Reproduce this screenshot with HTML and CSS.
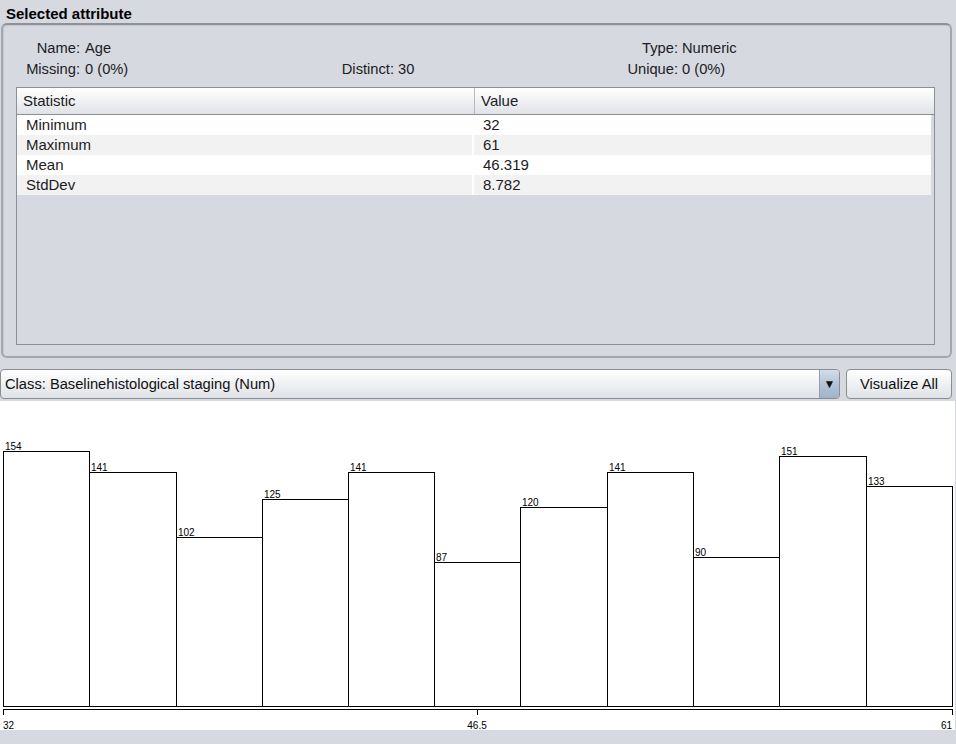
FILE: index.html
```html
<!DOCTYPE html>
<html>
<head>
<meta charset="utf-8">
<link rel="stylesheet" href="styles.css">
</head>
<body>
<div class="title">Selected attribute</div>
<div class="panel">
  <div class="info">
    <div class="group g1">
      <span class="lbl">Name:</span><span class="val">Age</span>
      <span class="lbl">Missing:</span><span class="val">0 (0%)</span>
    </div>
    <div class="group g2">
      <span class="lbl"></span><span class="val"></span>
      <span class="lbl">Distinct:</span><span class="val">30</span>
    </div>
    <div class="group g3">
      <span class="lbl">Type:</span><span class="val">Numeric</span>
      <span class="lbl">Unique:</span><span class="val">0 (0%)</span>
    </div>
  </div>
  <div class="table">
    <div class="thead">
      <div class="th c1">Statistic</div>
      <div class="th c2">Value</div>
    </div>
    <div class="tbody">
      <div class="tr"><div class="td c1">Minimum</div><div class="td c2">32</div></div>
      <div class="tr alt"><div class="td c1">Maximum</div><div class="td c2">61</div></div>
      <div class="tr"><div class="td c1">Mean</div><div class="td c2">46.319</div></div>
      <div class="tr alt"><div class="td c1">StdDev</div><div class="td c2">8.782</div></div>
    </div>
  </div>
</div>
<div class="controls">
  <div class="combo">
    <span class="combo-text">Class: Baselinehistological staging (Num)</span>
    <span class="combo-arrow">&#9660;</span>
  </div>
  <div class="button">Visualize All</div>
</div>
<div class="hist">
  <svg width="955" height="329" viewBox="0 0 955 329" shape-rendering="crispEdges">
    <g fill="#fff" stroke="#000" stroke-width="1">
      <rect x="3.5" y="50.5" width="86" height="255"/>
      <rect x="89.5" y="71.5" width="87" height="234"/>
      <rect x="176.5" y="136.5" width="86" height="169"/>
      <rect x="262.5" y="98.5" width="86" height="207"/>
      <rect x="348.5" y="71.5" width="86" height="234"/>
      <rect x="434.5" y="161.5" width="86" height="144"/>
      <rect x="520.5" y="106.5" width="87" height="199"/>
      <rect x="607.5" y="71.5" width="86" height="234"/>
      <rect x="693.5" y="156.5" width="86" height="149"/>
      <rect x="779.5" y="55.5" width="87" height="250"/>
      <rect x="866.5" y="85.5" width="86" height="220"/>
    </g>
    <g class="blabel">
      <text x="5" y="49">154</text>
      <text x="91" y="70">141</text>
      <text x="178" y="135">102</text>
      <text x="264" y="97">125</text>
      <text x="350" y="70">141</text>
      <text x="436" y="160">87</text>
      <text x="522" y="105">120</text>
      <text x="609" y="70">141</text>
      <text x="695" y="155">90</text>
      <text x="781" y="54">151</text>
      <text x="868" y="84">133</text>
    </g>
    <g stroke="#000" stroke-width="1">
      <line x1="3" y1="308.5" x2="953" y2="308.5"/>
      <line x1="3.5" y1="308" x2="3.5" y2="314"/>
      <line x1="477.5" y1="308" x2="477.5" y2="314"/>
      <line x1="952.5" y1="308" x2="952.5" y2="314"/>
    </g>
    <g class="alabel">
      <text x="3" y="328">32</text>
      <text x="477" y="328" text-anchor="middle">46.5</text>
      <text x="952" y="328" text-anchor="end">61</text>
    </g>
  </svg>
</div>
</body>
</html>
```

FILE: styles.css
```css
html, body {
  margin: 0;
  padding: 0;
}
body {
  width: 956px;
  height: 744px;
  overflow: hidden;
  background: #d6d9e0;
  font-family: "Liberation Sans", Arial, sans-serif;
  font-size: 14.7px;
  color: #1c1c24;
}
.title {
  height: 23px;
  box-sizing: border-box;
  padding: 5px 0 0 6px;
  line-height: 17px;
  font-size: 15px;
  font-weight: bold;
  color: #000;
}
.panel {
  box-sizing: border-box;
  height: 335px;
  margin: 0 4px 0 1px;
  border: 2px solid #a3a6ac;
  border-top-color: #8e9196;
  border-radius: 6px;
  box-shadow: inset 1px 1px 0 #c4c7cd;
  padding: 13px 15px 11px 13px;
  display: flex;
  flex-direction: column;
}
.info {
  display: flex;
  height: 42px;
  margin-bottom: 7px;
}
.group {
  box-sizing: border-box;
  display: grid;
  grid-template-rows: 21px 21px;
  align-items: center;
  justify-content: start;
  line-height: 17px;
}
.group .lbl { text-align: right; }
.g1 { width: 324px; grid-template-columns: 55px auto; column-gap: 5px; padding-left: 9px; }
.g2 { width: 283px; grid-template-columns: 54px auto; column-gap: 4px; }
.g3 { grid-template-columns: 55px auto; column-gap: 4px; }
.table {
  flex: 1;
  border: 1px solid #8c8f95;
  display: flex;
  flex-direction: column;
  font-size: 15px;
}
.thead {
  display: flex;
  height: 26px;
  border-bottom: 1px solid #8a8d92;
  background: linear-gradient(#ffffff, #f3f4f6 40%, #dfe2e7);
}
.th {
  line-height: 26px;
  padding-left: 6px;
  box-sizing: border-box;
}
.thead .c1 {
  width: 458px;
  border-right: 1px solid #b6b9be;
}
.thead .c2 { flex: 1; }
.tbody {
  padding-right: 3px;
}
.tr {
  display: flex;
  height: 20px;
  background: #fff;
  column-gap: 2px;
}
.td {
  line-height: 20px;
  box-sizing: border-box;
}
.tr .c1 { width: 455px; padding-left: 9px; }
.tr .c2 { flex: 1; padding-left: 9px; }
.tr.alt .td { background: #f2f2f2; }
.controls {
  display: flex;
  margin: 11px 4px 0 0;
  height: 30px;
  column-gap: 6px;
}
.combo {
  width: 840px;
  box-sizing: border-box;
  border: 1px solid #8a8d93;
  border-radius: 4px;
  background: linear-gradient(#ffffff, #f1f2f4 45%, #dfe2e6);
  display: flex;
  align-items: center;
  overflow: hidden;
}
.combo-text {
  flex: 1;
  padding-left: 4px;
  color: #111;
}
.combo-arrow {
  width: 19px;
  height: 100%;
  border-left: 1px solid #8fa0b2;
  background: linear-gradient(#d3dee9, #b3c4d6 50%, #9fb3c8);
  display: flex;
  align-items: center;
  justify-content: center;
  font-size: 12px;
  color: #111;
}
.button {
  flex: 1;
  box-sizing: border-box;
  border: 1px solid #8a8d93;
  border-radius: 4px;
  background: linear-gradient(#ffffff, #f1f2f4 45%, #dfe2e6);
  display: flex;
  align-items: center;
  justify-content: center;
  color: #111;
}
.hist {
  margin-top: 2px;
  width: 955px;
  height: 329px;
  background: #fff;
}
.hist svg { display: block; }
.blabel text, .alabel text {
  font-family: "Liberation Sans", Arial, sans-serif;
  font-size: 10px;
  fill: #000;
}
```
